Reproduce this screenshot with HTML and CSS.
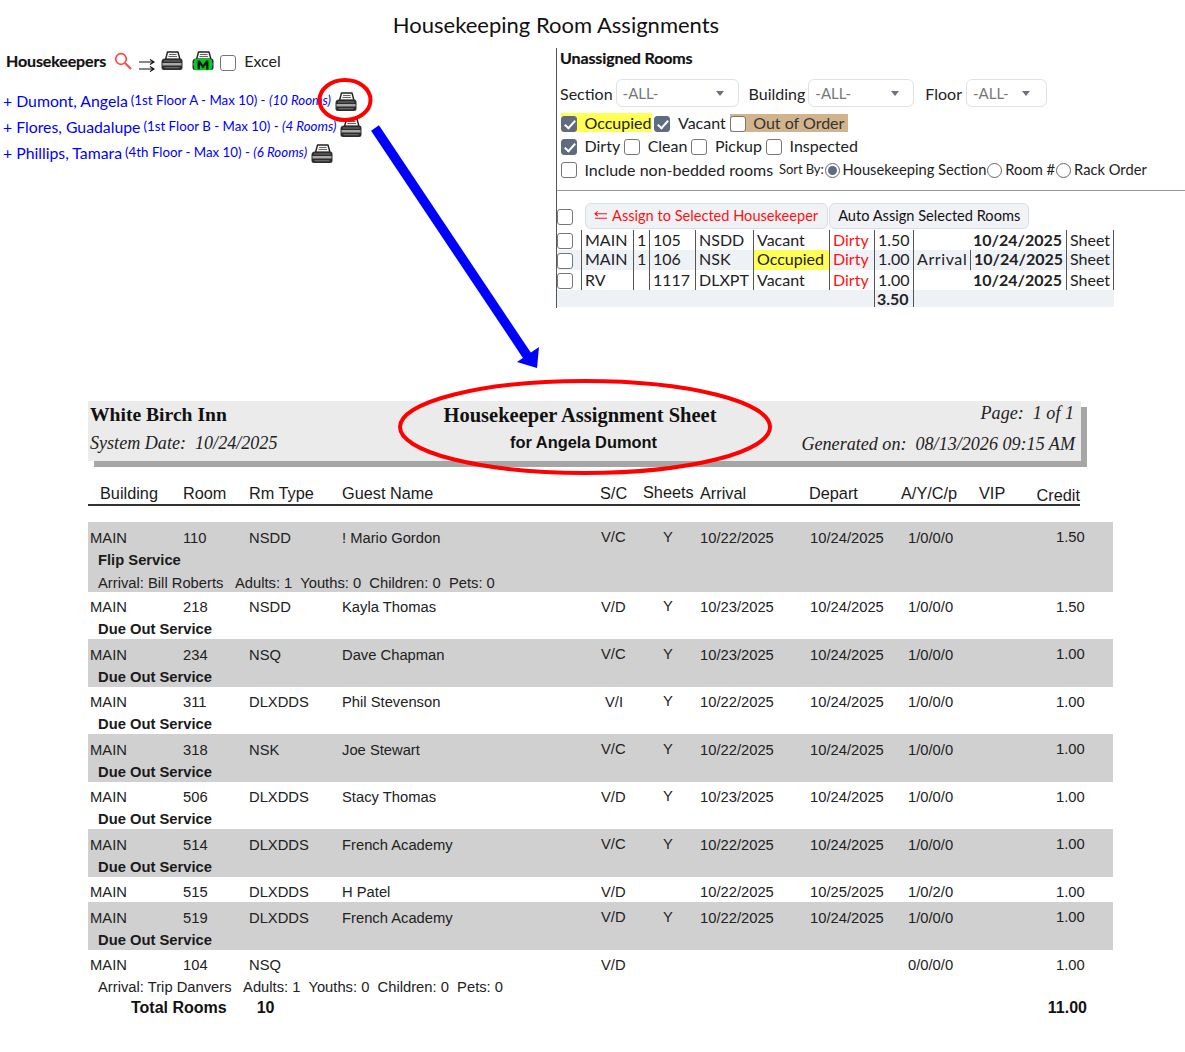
FILE: index.html
```html
<!DOCTYPE html>
<html lang="en">
<head>
<meta charset="utf-8">
<title>Housekeeping Room Assignments</title>
<link rel="stylesheet" href="styles.css">
</head>
<body>
<svg width="0" height="0" class="defs">
  <defs>
    <symbol id="printer" viewBox="0 0 22 20">
      <path d="M6.500 1h10.500l2 7.500H4.500z" fill="#f4f4f4" stroke="#222" stroke-width="1.400" stroke-linejoin="round"/>
      <path d="M8 3.500h7.500M7.500 5.500h8.500" stroke="#666" stroke-width="1"/>
      <path d="M4 7.500h15a2.500 2.500 0 0 1 2.500 2.500v6.500a2.500 2.500 0 0 1-2.500 2.500H3a2.500 2.500 0 0 1-2.500-2.500V11A3.500 3.500 0 0 1 4 7.500z" fill="#2c2c2c"/>
      <path d="M3 9.500h16.500v1H3z" fill="#777"/>
      <path d="M1.500 12h19v2.500h-19z" fill="#a8a8a8"/>
      <path d="M3.500 16h15v1.300h-15z" fill="#666"/>
    </symbol>
  </defs>
</svg>

<h1 class="page-title">Housekeeping Room Assignments</h1>

<div class="top">
  <section class="keepers">
    <div class="keepers-head">
      <b class="keepers-title">Housekeepers</b>
      <svg class="ico-search" viewBox="0 0 18 18"><circle cx="7" cy="7" r="5.300" fill="none" stroke="#f44" stroke-width="1.700"/><path d="M11 11l6 6" stroke="#f44" stroke-width="2"/></svg>
      <svg class="ico-arrows" viewBox="0 0 16 14"><path d="M0 4h14M11 1.500l4 2.500-4 2.500M0 11h14M11 8.500l4 2.500-4 2.500" fill="none" stroke="#111" stroke-width="1.200"/></svg>
      <svg class="ico-print"><use href="#printer"/></svg>
      <span class="ico-mail">
        <svg class="ico-print"><use href="#printer"/></svg>
        <svg class="ico-m" viewBox="0 0 20 13"><rect width="20" height="13" rx="2.500" fill="#0c2"/><path d="M4 12V2h2.500L10 7l3.500-5H16v10h-2.500V6.500L10 11 6.500 6.500V12z" fill="#111"/></svg>
      </span>
      <span class="cb"></span>
      <span class="excel">Excel</span>
    </div>
    <ul class="keeper-list">
      <li><span class="k-name">+ Dumont, Angela</span><span class="k-sub">(1st Floor A - Max 10) - <i>(10 Rooms)</i></span><svg class="ico-print k-print"><use href="#printer"/></svg></li>
      <li><span class="k-name">+ Flores, Guadalupe</span><span class="k-sub">(1st Floor B - Max 10) - <i>(4 Rooms)</i></span><svg class="ico-print k-print"><use href="#printer"/></svg></li>
      <li><span class="k-name">+ Phillips, Tamara</span><span class="k-sub">(4th Floor - Max 10) - <i>(6 Rooms)</i></span><svg class="ico-print k-print"><use href="#printer"/></svg></li>
    </ul>
  </section>

  <section class="unassigned">
    <b class="un-title">Unassigned Rooms</b>
    <div class="filters">
      <span>Section</span><span class="sel sel-a">-ALL-<em></em></span>
      <span class="f-gap">Building</span><span class="sel sel-b">-ALL-<em></em></span>
      <span class="f-gap">Floor</span><span class="sel sel-c">-ALL-<em></em></span>
    </div>
    <div class="opts">
      <span class="yellow"><span class="cb on"></span><span class="lbl">Occupied</span></span><span class="cb on"></span><span class="lbl">Vacant</span><span class="tan"><span class="cb"></span><span class="lbl">Out of Order</span></span>
    </div>
    <div class="opts">
      <span class="cb on"></span><span class="lbl">Dirty</span><span class="cb"></span><span class="lbl">Clean</span><span class="cb"></span><span class="lbl">Pickup</span><span class="cb"></span><span class="lbl">Inspected</span>
    </div>
    <div class="opts">
      <span class="cb"></span><span class="lbl">Include non-bedded rooms</span>
      <span class="sort">Sort By:</span><span class="radio on"></span><span class="r-lbl">Housekeeping Section</span><span class="radio"></span><span class="r-lbl">Room #</span><span class="radio"></span><span class="r-lbl">Rack Order</span>
    </div>
    <hr class="rule">
    <div class="actions">
      <span class="cb"></span>
      <span class="btn btn-red"><svg class="ico-left" viewBox="0 0 14 10"><path d="M14 2.500H1M4 0L1 2.500 4 5M14 7.500H1" fill="none" stroke="#f11" stroke-width="1.100"/></svg>Assign to Selected Housekeeper</span>
      <span class="btn">Auto Assign Selected Rooms</span>
    </div>
    <div class="rooms">
      <div class="r-row">
        <span class="cb"></span><span class="c">MAIN</span><span class="c">1</span><span class="c">105</span><span class="c">NSDD</span><span class="c">Vacant</span><span class="c red">Dirty</span><span class="c">1.50</span><span class="c"></span><span class="c date">10/24/2025</span><span class="c">Sheet</span>
      </div>
      <div class="r-row shade">
        <span class="cb"></span><span class="c">MAIN</span><span class="c">1</span><span class="c">106</span><span class="c">NSK</span><span class="c hl">Occupied</span><span class="c red">Dirty</span><span class="c">1.00</span><span class="c arr">Arrival</span><span class="c date">10/24/2025</span><span class="c">Sheet</span>
      </div>
      <div class="r-row">
        <span class="cb"></span><span class="c">RV</span><span class="c"></span><span class="c">1117</span><span class="c">DLXPT</span><span class="c">Vacant</span><span class="c red">Dirty</span><span class="c">1.00</span><span class="c"></span><span class="c date">10/24/2025</span><span class="c">Sheet</span>
      </div>
      <div class="r-total"><b>3.50</b></div>
    </div>
  </section>
</div>

<main class="report">
  <header class="banner">
    <div class="b-left">
      <div class="inn">White Birch Inn</div>
      <div class="ital">System Date:&nbsp; 10/24/2025</div>
    </div>
    <div class="b-mid">
      <div class="sheet">Housekeeper Assignment Sheet</div>
      <div class="for">for Angela Dumont</div>
    </div>
    <div class="b-right">
      <div class="ital page-no">Page:&nbsp; 1 of 1</div>
      <div class="ital gen">Generated on:&nbsp; 08/13/2026 09:15 AM</div>
    </div>
  </header>

  <div class="heads">
    <span class="h-b">Building</span><span>Room</span><span>Rm Type</span><span>Guest Name</span><span>S/C</span><span class="h-s">Sheets</span><span>Arrival</span><span>Depart</span><span>A/Y/C/p</span><span>VIP</span><span class="h-c">Credit</span>
  </div>

  <div class="rows">
    <article class="row gray first">
      <div class="line"><span>MAIN</span><span>110</span><span>NSDD</span><span>! Mario Gordon</span><span class="up">V/C</span><span class="up">Y</span><span>10/22/2025</span><span>10/24/2025</span><span>1/0/0/0</span><span></span><span class="up num">1.50</span></div>
      <div class="svc">Flip Service</div>
      <div class="note">Arrival: Bill Roberts&nbsp;&nbsp; Adults: 1&nbsp; Youths: 0&nbsp; Children: 0&nbsp; Pets: 0</div>
    </article>
    <article class="row">
      <div class="line"><span>MAIN</span><span>218</span><span>NSDD</span><span>Kayla Thomas</span><span>V/D</span><span class="up">Y</span><span>10/23/2025</span><span>10/24/2025</span><span>1/0/0/0</span><span></span><span class="num">1.50</span></div>
      <div class="svc">Due Out Service</div>
    </article>
    <article class="row gray">
      <div class="line"><span>MAIN</span><span>234</span><span>NSQ</span><span>Dave Chapman</span><span class="up">V/C</span><span class="up">Y</span><span>10/23/2025</span><span>10/24/2025</span><span>1/0/0/0</span><span></span><span class="up num">1.00</span></div>
      <div class="svc">Due Out Service</div>
    </article>
    <article class="row">
      <div class="line"><span>MAIN</span><span>311</span><span>DLXDDS</span><span>Phil Stevenson</span><span class="vi">V/I</span><span class="up">Y</span><span>10/22/2025</span><span>10/24/2025</span><span>1/0/0/0</span><span></span><span class="num">1.00</span></div>
      <div class="svc">Due Out Service</div>
    </article>
    <article class="row gray">
      <div class="line"><span>MAIN</span><span>318</span><span>NSK</span><span>Joe Stewart</span><span class="up">V/C</span><span class="up">Y</span><span>10/22/2025</span><span>10/24/2025</span><span>1/0/0/0</span><span></span><span class="up num">1.00</span></div>
      <div class="svc">Due Out Service</div>
    </article>
    <article class="row">
      <div class="line"><span>MAIN</span><span>506</span><span>DLXDDS</span><span>Stacy Thomas</span><span>V/D</span><span class="up">Y</span><span>10/23/2025</span><span>10/24/2025</span><span>1/0/0/0</span><span></span><span class="num">1.00</span></div>
      <div class="svc">Due Out Service</div>
    </article>
    <article class="row gray">
      <div class="line"><span>MAIN</span><span>514</span><span>DLXDDS</span><span>French Academy</span><span class="up">V/C</span><span class="up">Y</span><span>10/22/2025</span><span>10/24/2025</span><span>1/0/0/0</span><span></span><span class="up num">1.00</span></div>
      <div class="svc">Due Out Service</div>
    </article>
    <article class="row short">
      <div class="line"><span>MAIN</span><span>515</span><span>DLXDDS</span><span>H Patel</span><span>V/D</span><span></span><span>10/22/2025</span><span>10/25/2025</span><span>1/0/2/0</span><span></span><span class="num">1.00</span></div>
    </article>
    <article class="row gray">
      <div class="line"><span>MAIN</span><span>519</span><span>DLXDDS</span><span>French Academy</span><span class="up">V/D</span><span class="up">Y</span><span>10/22/2025</span><span>10/24/2025</span><span>1/0/0/0</span><span></span><span class="up num">1.00</span></div>
      <div class="svc">Due Out Service</div>
    </article>
    <article class="row">
      <div class="line"><span>MAIN</span><span>104</span><span>NSQ</span><span></span><span>V/D</span><span></span><span></span><span></span><span>0/0/0/0</span><span></span><span class="num">1.00</span></div>
      <div class="note note-tight">Arrival: Trip Danvers&nbsp;&nbsp; Adults: 1&nbsp; Youths: 0&nbsp; Children: 0&nbsp; Pets: 0</div>
    </article>
  </div>

  <footer class="totals">
    <b class="t-label">Total Rooms</b><b class="t-count">10</b><b class="t-credit">11.00</b>
  </footer>
</main>

<svg class="marks" viewBox="0 0 1185 1052">
  <ellipse cx="345" cy="100" rx="25.500" ry="20" fill="none" stroke="#f00" stroke-width="4"/>
  <ellipse cx="585" cy="427" rx="185" ry="46" fill="none" stroke="#f00" stroke-width="4"/>
  <path d="M375 128L528 357" stroke="#00f" stroke-width="9.500" fill="none"/>
  <path d="M539 347L517 362 537 368z" fill="#00f"/>
</svg>
</body>
</html>
```

FILE: styles.css
```css
* { box-sizing: border-box; }
html, body { margin: 0; padding: 0; }
body {
  width: 1185px;
  height: 1052px;
  overflow: hidden;
  position: relative;
  background: #fff;
  color: #212529;
  font-family: Lato, sans-serif;
  font-size: 16px;
}
.defs { display: block; height: 0; }
.page-title {
  margin: 0;
  padding: 11px 0 0 0;
  height: 48px;
  text-align: center;
  font-weight: 400;
  font-size: 22px;
  line-height: 27px;
  color: #111;
  width: 1112px;
}

/* top */
.top { display: grid; grid-template-columns: 556px 1fr; height: 260px; }
.keepers { padding-left: 4px; }
.keepers-head { display: flex; align-items: center; height: 28px; padding: 0 0 2px 2px; }
.keepers-title { font-size: 16px; color: #111; letter-spacing: -.13px; -webkit-text-stroke: .2px #111; margin-top: -2px; }
.ico-search { width: 18px; height: 18px; margin: -1px 0 0 8px; }
.ico-arrows { width: 16px; height: 14px; margin: 8px 0 0 7px; }
.ico-print { width: 22px; height: 20px; display: block; }
.keepers-head > .ico-print { margin: 0 0 0 6px; }
.ico-mail { position: relative; margin: 0 0 0 9px; display: block; width: 22px; height: 20px; }
.ico-m { position: absolute; left: 2px; top: 7px; width: 18px; height: 13px; }
.keepers-head .cb { margin: 4px 0 0 6px; }
.excel { margin: -2px 0 0 8px; font-size: 16px; color: #222; }
.keeper-list { list-style: none; margin: 11px 0 0 -1px; padding: 0; }
.keeper-list li { display: flex; align-items: center; height: 26px; color: #00f; white-space: pre; }
.k-name { font-size: 15.800px; }
.k-sub { font-size: 13.300px; margin-left: 3px; }
.k-print { margin: 3px 0 0 4px; }

.unassigned { border-left: 1px solid #555; padding-left: 4px; }
.un-title { display: block; margin: -1px 0 0 -1px; font-size: 16px; line-height: 22px; color: #111; letter-spacing: -.12px; -webkit-text-stroke: .2px #111; }
.filters { display: flex; align-items: center; height: 28px; margin: 10px 0 0 -1px; font-size: 16px; color: #222; }
.sel {
  display: flex; align-items: center; justify-content: space-between;
  height: 28px; margin-left: 4px; padding: 0 14px 0 6px;
  border: 1px solid #dee2e6; border-radius: 6px;
  color: #777; font-size: 15px;
}
.sel em { width: 0; height: 0; border-left: 4px solid transparent; border-right: 4px solid transparent; border-top: 5px solid #6b7280; }
.sel-a { width: 123px; margin-left: 3px; }
.sel-b { width: 106px; margin-left: 3px; }
.sel-c { width: 81px; padding-right: 16px; }
.f-gap { margin-left: 10px; }
.sel-b + .f-gap { margin-left: 11px; }
.opts { display: flex; align-items: center; height: 23.250px; font-size: 16px; color: #222; white-space: nowrap; }
.filters + .opts { margin-top: 4px; }
.cb {
  display: inline-block; flex: none; width: 16px; height: 16px; margin-top: 2px;
  border: 1px solid #777; border-radius: 3px; background: #fff;
  position: relative;
}
.cb.on { background: #5f6b80; border-color: #5f6b80; }
.cb.on::after {
  content: ""; position: absolute; left: 5px; top: 1px;
  width: 4px; height: 9px;
  border: solid #fff; border-width: 0 2px 2px 0;
  transform: rotate(42deg);
}
.lbl { margin-left: 7.500px; margin-right: 4px; }
.yellow { display: flex; align-items: center; background: #ffff55; height: 19px; }
.yellow .lbl { margin-right: 1px; }
.yellow + .cb { margin-left: 2px; }
.tan { display: flex; align-items: center; background: #d2b48c; height: 18px; color: #333; }
.sort { font-size: 13px; margin-left: 2px; letter-spacing: -.1px; }
.radio { width: 15px; height: 15px; margin: 2px 1px 0 1px; border: 1px solid #666; border-radius: 50%; flex: none; background: #fff; position: relative; }
.radio.on::after { content: ""; position: absolute; left: 2px; top: 2px; width: 9px; height: 9px; border-radius: 50%; background: #5f6b80; }
.r-lbl { font-size: 14.700px; margin-left: 2px; }
.rule { margin: 9px 0 0 -4px; height: 1px; border: 0; background: #999; }
.actions { display: flex; align-items: center; margin: 11px 0 0 -4px; height: 28px; }
.actions .cb { margin: 3px 9px 0 0; }
.btn {
  display: inline-flex; align-items: center; height: 26px; padding: 0 8px;
  margin-left: 1px; background: #f1f2f6; border: 1px solid #d9dde5; border-radius: 6px;
  font-size: 14.600px; color: #111; white-space: nowrap;
}
.btn-red { color: #f11; padding: 0 9px 0 8px; margin-left: 3px; }
.ico-left { width: 13px; height: 10px; margin-right: 5px; }
.rooms { width: 557px; margin-left: -4px; font-size: 16px; color: #222; }
.r-row { display: grid; grid-template-columns: 24px 52px 16px 46px 58px 76px 45px 39px 57px 96px 48px; height: 20px; line-height: 19px; }
.r-row.shade { background: #eef1f6; line-height: 18px; }
.r-row .cb { margin: 3px 0 0 0; }
.c { border-left: 1px solid #555; padding-left: 3px; white-space: nowrap; }
.c:last-child { border-right: 1px solid #555; }
.red { color: #f11; }
.hl { background: #ffff55; }
.arr { letter-spacing: .6px; }
.date { font-weight: 700; text-align: right; padding-right: 4px; border-left: 0; }
.shade .date { border-left: 1px solid #555; }
.r-total { background: #eef1f6; height: 17px; padding-left: 317px; line-height: 18px; color: #222; }
.r-total b { display: inline-block; width: 40px; height: 17px; border-left: 1px solid #555; border-right: 1px solid #555; padding-left: 2px; }

/* report */
.report { margin-left: 88px; width: 1025px; font-family: "Liberation Sans", Arial, sans-serif; color: #1a1a1a; }
.banner {
  display: grid; grid-template-columns: 290px 400px 1fr;
  width: 993px; height: 60px; margin-top: 93px;
  background: #ebebeb; box-shadow: 6px 6px 0 #a6a6a6;
  padding: 0 6px 0 2px;
}
.inn { font: 700 19.600px/26px "Liberation Serif", serif; color: #111; margin-top: 1px; }
.ital { font: italic 18.100px/26px "Liberation Serif", serif; color: #222; }
.b-left .ital { margin-top: 2px; }
.b-mid { text-align: center; }
.sheet { font: 700 20.500px/26px "Liberation Serif", serif; color: #111; margin-top: 1px; }
.for { font: 700 16.400px/24px "Liberation Sans", sans-serif; color: #111; margin-top: 2px; padding-left: 7px; }
.b-right { text-align: right; }
.page-no { margin-right: 1px; margin-top: -1px; }
.gen { margin-top: 5px; }

.line {
  display: grid;
  grid-template-columns: 93px 66px 93px 259px 62px 37px 110px 98px 108px 40px 1fr;
}
.heads {
  display: grid;
  grid-template-columns: 93px 66px 93px 258px 43px 57px 109px 92px 78px 40px 1fr;
  width: 992px; height: 39px; margin-top: 6px; padding: 16px 0 0 2px;
  border-bottom: 2px solid #333; font-size: 16.300px; line-height: 20px; white-space: nowrap;
}
.h-b { padding-left: 10px; }
.h-s { margin-top: -1px; }
.h-c { text-align: right; margin-top: 2px; }
.rows { margin-top: 16px; font-size: 14.750px; }
.row { height: 47px; padding-left: 2px; color: #222; }
.row.gray { height: 48px; padding-top: 1px; background: #d0d0d0; }
.row.short { height: 25px; }
.row.first { height: 70px; }
.line { height: 25px; padding-top: 4px; line-height: 22px; white-space: nowrap; }
.up { margin-top: -1px; }
.vi { padding-left: 4px; }
.num { text-align: right; padding-right: 30px; }
.svc { font-weight: 700; line-height: 22px; padding: 1px 0 0 8px; color: #1a1a1a; }
.note { line-height: 24px; padding-left: 8px; }
.note-tight { line-height: 20px; margin-top: 2px; }
.totals { display: flex; padding-top: 1px; font-size: 16px; line-height: 20px; color: #111; }
.t-label { margin-left: 43px; }
.t-count { margin-left: 30px; }
.t-credit { margin-left: auto; margin-right: 26px; }

.marks { position: absolute; left: 0; top: 0; width: 1185px; height: 1052px; pointer-events: none; }
```
